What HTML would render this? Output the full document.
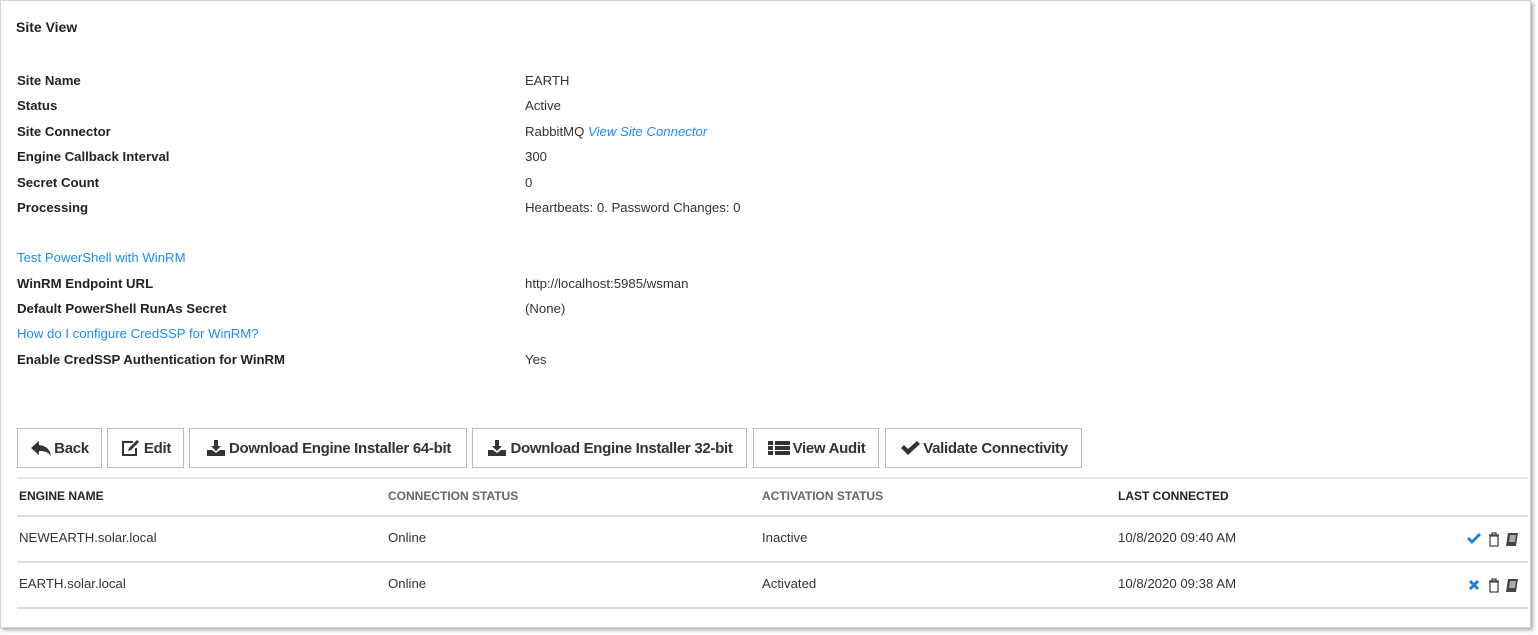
<!DOCTYPE html>
<html><head><style>
body{margin:0;width:1538px;height:635px;background:#fff;font-family:"Liberation Sans",Arial,sans-serif;position:relative;overflow:hidden}
.frame{position:absolute;left:0;top:0;width:1529px;height:626px;border:1px solid #d4d4d4;box-shadow:2px 2px 4px rgba(0,0,0,.35);background:#fff}
.t{position:absolute;font-size:13.2px;color:#333;white-space:nowrap;line-height:16px}
.b{font-weight:bold;color:#222}
.a{color:#1a8cff}
.btn{position:absolute;top:428px;height:38px;border:1px solid #bbb;box-sizing:content-box;font-size:15px;font-weight:bold;color:#333;display:flex;align-items:center;justify-content:center;letter-spacing:-0.3px}
.btn svg{margin-right:2px}
.hl{position:absolute;left:17px;width:1511px;height:1px;background:#ddd}
.h{position:absolute;top:489px;font-size:12px;font-weight:bold;color:#222}
.hg{color:#666}
</style></head><body>
<div class="frame"></div>
<div class="t b" style="left:16px;top:19px;font-size:14px">Site View</div>
<div class="t b" style="left:17px;top:73px">Site Name</div><div class="t" style="left:525px;top:73px">EARTH</div>
<div class="t b" style="left:17px;top:98px">Status</div><div class="t" style="left:525px;top:98px">Active</div>
<div class="t b" style="left:17px;top:124px">Site Connector</div><div class="t" style="left:525px;top:124px">RabbitMQ <i class="a">View Site Connector</i></div>
<div class="t b" style="left:17px;top:149px">Engine Callback Interval</div><div class="t" style="left:525px;top:149px">300</div>
<div class="t b" style="left:17px;top:175px">Secret Count</div><div class="t" style="left:525px;top:175px">0</div>
<div class="t b" style="left:17px;top:200px">Processing</div><div class="t" style="left:525px;top:200px">Heartbeats: 0. Password Changes: 0</div>
<div class="t a" style="left:17px;top:250px">Test PowerShell with WinRM</div>
<div class="t b" style="left:17px;top:276px">WinRM Endpoint URL</div><div class="t" style="left:525px;top:276px">http://localhost:5985/wsman</div>
<div class="t b" style="left:17px;top:301px">Default PowerShell RunAs Secret</div><div class="t" style="left:525px;top:301px">(None)</div>
<div class="t a" style="left:17px;top:326px">How do I configure CredSSP for WinRM?</div>
<div class="t b" style="left:17px;top:352px">Enable CredSSP Authentication for WinRM</div><div class="t" style="left:525px;top:352px">Yes</div>

<div class="btn" style="left:17px;width:83px"><svg width="22" height="16" viewBox="0 0 22 16"><path d="M9 1L1 8l8 7v-4c6 0 9 1 12 5 -1-6-4-10-12-11z" fill="#333"/></svg>Back</div>
<div class="btn" style="left:107px;width:75px"><svg width="22" height="18" viewBox="0 0 22 18"><path d="M13 3H3v13h13V9" fill="none" stroke="#333" stroke-width="2"/><path d="M8 12l1-3 8-8 2 2-8 8z" fill="#333"/></svg>Edit</div>
<div class="btn" style="left:189px;width:276px"><svg width="22" height="18" viewBox="0 0 22 18"><path d="M9 1h4v6h3l-5 5-5-5h3z M2 11h5l4 3 4-3h5v6H2z" fill="#333"/></svg>Download Engine Installer 64-bit</div>
<div class="btn" style="left:472px;width:273px"><svg width="22" height="18" viewBox="0 0 22 18"><path d="M9 1h4v6h3l-5 5-5-5h3z M2 11h5l4 3 4-3h5v6H2z" fill="#333"/></svg>Download Engine Installer 32-bit</div>
<div class="btn" style="left:753px;width:124px"><svg width="24" height="16" viewBox="0 0 24 16"><path d="M1 1h5v4H1zM8 1h15v4H8zM1 6h5v4H1zM8 6h15v4H8zM1 11h5v4H1zM8 11h15v4H8z" fill="#333"/></svg>View Audit</div>
<div class="btn" style="left:885px;width:195px"><svg width="22" height="16" viewBox="0 0 22 16"><path d="M2 8l3-3 4 4 9-8 3 3-12 11z" fill="#333"/></svg>Validate Connectivity</div>

<div class="hl" style="top:477px;height:2px;background:#e6e6e6"></div>
<div class="h" style="left:19px">ENGINE NAME</div>
<div class="h hg" style="left:388px">CONNECTION STATUS</div>
<div class="h hg" style="left:762px">ACTIVATION STATUS</div>
<div class="h" style="left:1118px">LAST CONNECTED</div>
<div class="hl" style="top:515px;height:2px"></div>
<div class="t" style="left:19px;top:530px">NEWEARTH.solar.local</div><div class="t" style="left:388px;top:530px">Online</div><div class="t" style="left:762px;top:530px">Inactive</div><div class="t" style="left:1118px;top:530px">10/8/2020 09:40 AM</div>
<div class="hl" style="top:561px;height:2px"></div>
<div class="t" style="left:19px;top:576px">EARTH.solar.local</div><div class="t" style="left:388px;top:576px">Online</div><div class="t" style="left:762px;top:576px">Activated</div><div class="t" style="left:1118px;top:576px">10/8/2020 09:38 AM</div>
<div class="hl" style="top:607px;height:2px"></div>

<svg style="position:absolute;left:1466px;top:531px" width="62" height="16" viewBox="0 0 62 16"><path d="M1 8l2-2 3 3 7-7 2 2-9 9z" fill="#1a7fdc"/><path d="M23 4h10M26 4V2h4v2M24 5h8v10h-8z" fill="none" stroke="#444" stroke-width="1.3"/><path d="M42 2h10l-2 13H40z" fill="#444"/><path d="M44 4h6l-1 7h-6z" fill="#aaa"/></svg>
<svg style="position:absolute;left:1466px;top:577px" width="62" height="16" viewBox="0 0 62 16"><path d="M4 4l8 8M12 4l-8 8" stroke="#1a7fdc" stroke-width="3"/><path d="M23 4h10M26 4V2h4v2M24 5h8v10h-8z" fill="none" stroke="#444" stroke-width="1.3"/><path d="M42 2h10l-2 13H40z" fill="#444"/><path d="M44 4h6l-1 7h-6z" fill="#aaa"/></svg>
</body></html>
